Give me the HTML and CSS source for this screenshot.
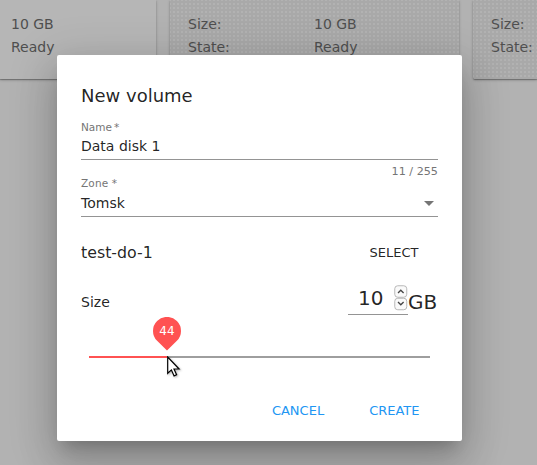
FILE: index.html
```html
<!DOCTYPE html>
<html lang="en">
<head>
<meta charset="utf-8">
<title>New volume</title>
<link rel="stylesheet" href="styles.css">
</head>
<body>
<div class="cards">
  <section class="card first"><dl><dd>10 GB</dd><dd>Ready</dd></dl></section>
  <section class="card dotted"><dl><dt>Size:</dt><dd>10 GB</dd><dt>State:</dt><dd>Ready</dd></dl></section>
  <section class="card dotted last"><dl><dt>Size:</dt><dt>State:</dt></dl></section>
</div>
<div class="overlay">
  <main class="dialog">
    <h1>New volume</h1>
    <div class="field">
      <label>Name<span class="star">*</span></label>
      <div class="value">Data disk 1</div>
    </div>
    <div class="hint">11 / 255</div>
    <div class="field">
      <label>Zone *</label>
      <div class="value zone"><span>Tomsk</span><i class="caret"></i></div>
    </div>
    <div class="row host"><span>test-do-1</span><button class="select">SELECT</button></div>
    <div class="row size">
      <span class="size-label">Size</span>
      <div class="amount">
        <span class="number">10</span>
        <svg class="spinner" width="14" height="26" viewBox="0 0 14 26" fill="none">
          <rect x=".75" y=".75" width="12" height="11.5" rx="3" fill="#fafafa" stroke="#b8b8b8"/>
          <rect x=".75" y="13.25" width="12" height="11.5" rx="3" fill="#fafafa" stroke="#b8b8b8"/>
          <path d="M4 8l2.8-2.8L9.6 8M4 17l2.8 2.8L9.6 17" stroke="#444" stroke-width="1.3"/>
        </svg>
      </div>
      <span class="unit">GB</span>
    </div>
    <div class="slider">
      <div class="fill"></div>
      <div class="bubble">
        <svg width="28" height="34" viewBox="0 0 28 34"><path d="M14 33.5L4.1 23.8A14 14 0 1 1 23.9 23.8Z" fill="#ff5252"/></svg>
        <span>44</span>
      </div>
      <svg class="cursor" width="16" height="23" viewBox="0 0 16 23"><path d="M.7 1v16.3l3.7-3.4 2.7 6 2.5-1.1-2.6-5.8h5.1z" fill="#fff" stroke="#000" stroke-width="1.2"/></svg>
    </div>
    <div class="actions"><button>CANCEL</button><button>CREATE</button></div>
  </main>
</div>
</body>
</html>
```
FILE: styles.css
```css
* { box-sizing: border-box; }
body {
  margin: 0;
  height: 465px;
  overflow: hidden;
  background: #b2b2b2;
  color: rgba(0, 0, 0, .87);
  font: 14px/20px "DejaVu Sans", sans-serif;
}
.cards {
  display: grid;
  grid-template-columns: 156px 289px 64px;
  column-gap: 14px;
}
.card {
  height: 79px;
  padding: 13px 18px 0;
  border-radius: 0 0 2px 2px;
  background: #b6b6b6;
  color: #4f4f4f;
  box-shadow: 0 1px 3px rgba(0, 0, 0, .25), 0 1px 1px rgba(0, 0, 0, .25);
}
.first { padding-left: 11px; border-bottom-left-radius: 0; }
.last { padding-right: 0; border-bottom-right-radius: 0; }
.dotted {
  background:
    conic-gradient(from 90deg at 2px 2px, #a9a9a9 270deg, #b2b2b2 0) 1px 3px / 4px 4px;
}
dl {
  display: grid;
  grid-template-columns: 126px 1fr;
  margin: 0;
  line-height: 23px;
}
.first dl, .last dl { grid-template-columns: auto; }
dd { margin: 0; }
.overlay {
  position: absolute;
  inset: 0;
  display: flex;
  padding: 55px 0 0 57px;
}
.dialog {
  width: 405px;
  height: 386px;
  padding: 24px;
  border-radius: 2px;
  background: #fff;
  box-shadow: 0 11px 15px -7px rgba(0, 0, 0, .2), 0 24px 38px 3px rgba(0, 0, 0, .14), 0 9px 46px 8px rgba(0, 0, 0, .12);
}
h1 {
  margin: 0;
  font-size: 18px;
  font-weight: 400;
  line-height: 34px;
}
.field { border-bottom: 1px solid #949494; }
label {
  display: block;
  padding-top: 8px;
  font-size: 10.5px;
  line-height: 13px;
  color: #757575;
}
.star { margin-left: 2px; }
.value {
  height: 25px;
  line-height: 25px;
}
.hint {
  height: 16px;
  padding-top: 4px;
  text-align: right;
  font-size: 11.2px;
  line-height: 15px;
  color: #757575;
}
.hint + .field label { padding-top: 1px; letter-spacing: .15px; }
.zone {
  display: flex;
  justify-content: space-between;
  align-items: center;
  height: 26px;
}
.caret {
  margin-right: 4px;
  border: 5px solid transparent;
  border-top-color: #757575;
  border-bottom: 0;
}
.row {
  display: flex;
  justify-content: space-between;
}
.host {
  margin-top: 18px;
  height: 36px;
  font-size: 15.8px;
  line-height: 36px;
}
button {
  padding: 0;
  border: 0;
  background: none;
  color: inherit;
  font: 13px/36px "DejaVu Sans", sans-serif;
}
.select { margin-right: 19.5px; }
.size {
  height: 44px;
  margin-top: 13px;
  align-items: flex-start;
}
.size-label { margin-right: auto; line-height: 36px; }
.amount {
  display: flex;
  width: 60px;
  height: 31px;
  padding-left: 10px;
  border-bottom: 1px solid #949494;
  font-size: 20px;
  line-height: 28px;
}
.number { width: 36px; }
.spinner { margin-top: 1px; }
.unit { width: 30px; font-size: 20px; line-height: 36px; }
.slider {
  position: relative;
  height: 2px;
  margin: 28px 8px 0;
  background: #9e9e9e;
}
.fill {
  width: 23%;
  height: 2px;
  background: #ff5252;
}
.bubble {
  position: absolute;
  left: 64px;
  top: -39px;
  width: 28px;
  height: 34px;
}
.bubble svg { display: block; }
.bubble span {
  position: absolute;
  inset: 0;
  text-align: center;
  font-size: 12px;
  line-height: 28px;
  color: #fff;
}
.cursor {
  position: absolute;
  left: 78px;
  top: 0;
  filter: drop-shadow(1px 1px 1px rgba(0, 0, 0, .3));
}
.actions {
  display: flex;
  justify-content: flex-end;
  gap: 45px;
  margin: 35px 18.5px 0 0;
  color: #2196f3;
}
```
